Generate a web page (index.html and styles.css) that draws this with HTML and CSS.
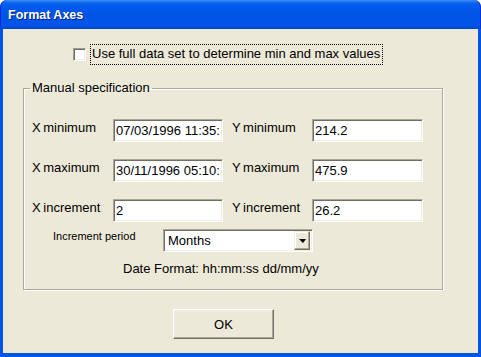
FILE: index.html
```html
<!DOCTYPE html>
<html lang="en">
<head>
  <meta charset="UTF-8" />
  <title>Format Axes</title>
  <link rel="stylesheet" href="styles.css">
</head>
<body>
  <div class="window">
    <div class="title-bar">Format Axes</div>
    <div class="client">
      <label class="check-row">
        <span class="check"></span>
        <span class="focus">Use full data set to determine min and max values</span>
      </label>

      <fieldset class="group">
        <legend>Manual specification</legend>
        <div class="group-body">
          <div class="axis-grid">
            <span class="lbl">X minimum</span>
            <input class="field" type="text" value="07/03/1996 11:35:">
            <span class="lbl lbl-y">Y minimum</span>
            <input class="field" type="text" value="214.2">

            <span class="lbl">X maximum</span>
            <input class="field" type="text" value="30/11/1996 05:10:">
            <span class="lbl lbl-y">Y maximum</span>
            <input class="field" type="text" value="475.9">

            <span class="lbl">X increment</span>
            <input class="field" type="text" value="2">
            <span class="lbl lbl-y">Y increment</span>
            <input class="field" type="text" value="26.2">
          </div>

          <div class="period-row">
            <span class="small-lbl">Increment period</span>
            <div class="combo">
              <span class="combo-text">Months</span>
              <span class="combo-btn"><span class="arrow"></span></span>
            </div>
          </div>

          <div class="date-format">Date Format: hh:mm:ss dd/mm/yy</div>
        </div>
      </fieldset>

      <button class="ok-btn" type="button">OK</button>
    </div>
  </div>
</body>
</html>
```

FILE: styles.css
```css
* {
  box-sizing: border-box;
  margin: 0;
  padding: 0;
}

body {
  background: #fff;
  font-family: "Liberation Sans", Arial, sans-serif;
  font-size: 13px;
  color: #000;
}

.window {
  width: 481px;
  height: 357px;
  display: flex;
  flex-direction: column;
}

.title-bar {
  height: 29px;
  flex: none;
  border-radius: 7px 7px 0 0;
  background: linear-gradient(to bottom, #3d8ff8 0, #0a63ed 3px, #0058ee 7px, #0054e3 50%, #0055ea 85%, #0045cc 100%);
  box-shadow: inset 1px 0 #0831d9, inset -1px 0 #0831d9;
  color: #fff;
  font-weight: bold;
  font-size: 12.5px;
  line-height: 31px;
  padding-left: 8px;
  text-shadow: 1px 1px #0a1e80;
}

.client {
  flex: 1;
  background: #ece9d8;
  border-left: 3px solid #0055e5;
  border-right: 3px solid #0055e5;
  border-bottom: 4px solid #0055e5;
  box-shadow: -1px 0 #0831d9, 1px 0 #0831d9, 0 1px #0831d9;
  padding-top: 15px;
}

.check-row {
  display: flex;
  align-items: center;
  height: 20px;
  padding-left: 70px;
}

.check {
  width: 13px;
  height: 13px;
  background: #fff;
  border: 1px solid;
  border-color: #9d9a8e #fff #fff #9d9a8e;
  box-shadow: inset 1px 1px #716f64, inset -1px -1px #f1efe2;
  margin-right: 4px;
}

.focus {
  border: 1px dotted #000;
  padding: 1px 2px 2px 1px;
  line-height: 16px;
}

.group {
  margin: 16px 0 0 20px;
  width: 420px;
  border: 1px solid #aca899;
  box-shadow: inset 1px 1px #fff, 1px 1px #fff;
}

.group legend {
  margin-left: 6px;
  padding: 0 2px;
  line-height: 16px;
}

.group-body {
  padding: 23px 19px 13px 8px;
}

.axis-grid {
  display: grid;
  grid-template-columns: 81px 110px 89px 111px;
  row-gap: 17px;
}

.lbl {
  line-height: 18px;
  word-spacing: -1px;
}

.lbl-y {
  margin-left: 9px;
}

.field {
  height: 23px;
  width: 100%;
  font: 13px "Liberation Sans", Arial, sans-serif;
  color: #000;
  background: #fff;
  border: 1px solid;
  border-color: #aca899 #fff #fff #aca899;
  box-shadow: inset 1px 1px #716f64, inset -1px -1px #f1efe2;
  padding: 0 1px 0 2px;
  outline: none;
}

.period-row {
  display: flex;
  align-items: flex-start;
  margin-top: 7px;
  padding-left: 21px;
}

.small-lbl {
  width: 110px;
  font-size: 11px;
  line-height: 14px;
}

.combo {
  width: 150px;
  height: 23px;
  display: flex;
  align-items: center;
  background: #fff;
  border: 1px solid;
  border-color: #aca899 #fff #fff #aca899;
  box-shadow: inset 1px 1px #716f64, inset -1px -1px #f1efe2;
  padding: 2px;
}

.combo-text {
  flex: 1;
  padding-left: 2px;
}

.combo-btn {
  width: 16px;
  height: 19px;
  display: flex;
  align-items: center;
  justify-content: center;
  background: #ece9d8;
  border: 1px solid;
  border-color: #f1efe2 #716f64 #716f64 #f1efe2;
  box-shadow: inset -1px -1px #aca899, inset 1px 1px #fff;
}

.arrow {
  width: 0;
  height: 0;
  border-left: 4px solid transparent;
  border-right: 3px solid transparent;
  border-top: 4px solid #000;
}

.date-format {
  margin: 9px 0 0 91px;
  line-height: 15px;
}

.ok-btn {
  margin: 19px 0 0 170px;
  width: 101px;
  height: 30px;
  font: 13px "Liberation Sans", Arial, sans-serif;
  color: #000;
  background: #ece9d8;
  border: 1px solid;
  border-color: #fff #716f64 #716f64 #fff;
  box-shadow: inset -1px -1px #aca899, inset 1px 1px #f1efe2;
}
```
